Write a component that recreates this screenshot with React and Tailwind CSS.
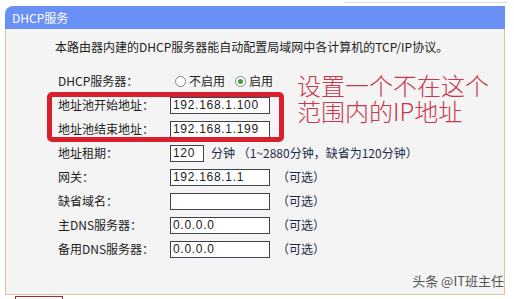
const cjk = { fontFamily: '"Noto Sans CJK SC", "Noto Sans", sans-serif' };
const ip = { fontFamily: '"Liberation Sans", Arial, sans-serif' };

const Radio = ({ checked, label }) => (
    <label className="flex items-center gap-[3px] text-[#222]">
        <span className="w-[11px] h-[11px] rounded-full border border-[#7b8794] bg-white flex items-center justify-center">
            {checked && <span className="w-[5px] h-[5px] rounded-full bg-[#3c9d3c]" />}
        </span>
        <span>{label}</span>
    </label>
);

const Field = ({ value, width = "w-[100px]" }) => (
    <div
        className={`${width} h-[17px] border border-[#3b4250] bg-white pl-[2px] text-[12px] leading-[15px] tracking-[0.7px] text-[#222]`}
        style={ip}
    >
        {value}
    </div>
);

const Optional = () => <span className="ml-[7px] text-[#1d2b4a]">（可选）</span>;

const Row = ({ label, children }) => (
    <div className="h-[24px] flex items-center">
        <div className="w-[112px] text-[#222]">{label}</div>
        <div className="flex items-center">{children}</div>
    </div>
);

export default function App() {
    return (
        <div className="w-[514px] h-[299px] bg-white relative overflow-hidden text-[12px] leading-[16px]" style={cjk}>
            <div className="h-[6px] flex justify-end pt-[2px] pr-[6px]">
                <div className="w-[164px] h-px bg-[#dcdcdc]" />
            </div>

            <div className="ml-[5px] w-[500px]">
                <div className="h-[23px] bg-[#6a90f6] rounded-tl-[8px] flex items-center pl-[7px] text-white">
                    DHCP服务
                </div>

                <div className="h-[266px] bg-[#f4f4f4] border-l border-r border-b border-[#e6c090] pt-[10px]">
                    <p className="pl-[49px] text-[#222]">
                        本路由器内建的DHCP服务器能自动配置局域网中各计算机的TCP/IP协议。
                    </p>

                    <div className="mt-[14px] pl-[52px] flex flex-col">
                        <Row label="DHCP服务器：">
                            <div className="flex items-center gap-[10px] ml-[5px]">
                                <Radio label="不启用" />
                                <Radio label="启用" checked />
                            </div>
                        </Row>
                        <Row label="地址池开始地址：">
                            <Field value="192.168.1.100" />
                        </Row>
                        <Row label="地址池结束地址：">
                            <Field value="192.168.1.199" />
                        </Row>
                        <Row label="地址租期：">
                            <Field value="120" width="w-[34px]" />
                            <span className="ml-[7px] text-[#1d2b4a]">分钟 （1~2880分钟，缺省为120分钟）</span>
                        </Row>
                        <Row label="网关：">
                            <Field value="192.168.1.1" />
                            <Optional />
                        </Row>
                        <Row label="缺省域名：">
                            <Field value="" />
                            <Optional />
                        </Row>
                        <Row label="主DNS服务器：">
                            <Field value="0.0.0.0" />
                            <Optional />
                        </Row>
                        <Row label="备用DNS服务器：">
                            <Field value="0.0.0.0" />
                            <Optional />
                        </Row>
                    </div>
                </div>
            </div>

            <div className="ml-[15px] mt-[1px] w-[48px] h-[4px] border-t border-l border-r border-[#a3283a]" />

            {/* red annotation */}
            <div className="absolute left-[47px] top-[92px] w-[237px] h-[50px] border-[5px] border-[#d8202d] rounded-[5px]" />
            <div className="absolute left-[297px] top-[72px] text-[24px] leading-[26px] font-light text-[#c8374c]">
                <div>设置一个不在这个</div>
                <div>范围内的IP地址</div>
            </div>

            {/* watermark */}
            <div className="absolute right-[10px] top-[273px] text-[13px] leading-[16px] text-[#555]">
                头条 @IT班主任
            </div>
        </div>
    );
}
